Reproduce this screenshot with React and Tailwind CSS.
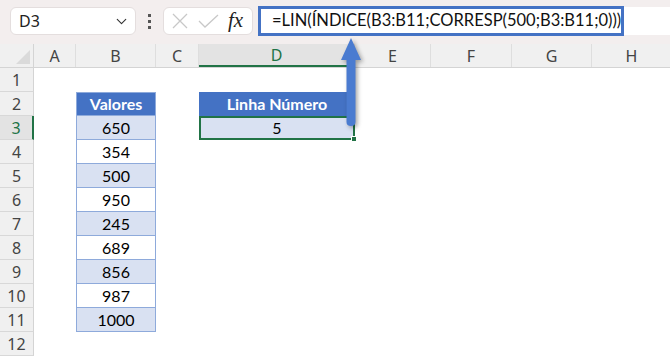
import { ChevronDown } from "lucide-react";

const cols = [
  { name: "A", w: 42 },
  { name: "B", w: 80 },
  { name: "C", w: 43 },
  { name: "D", w: 156 },
  { name: "E", w: 76 },
  { name: "F", w: 81 },
  { name: "G", w: 80 },
  { name: "H", w: 80 },
];

const valores = [650, 354, 500, 950, 245, 689, 856, 987, 1000];

const uiFont = { fontFamily: '"Noto Sans", "Open Sans", sans-serif' };
const cellFont = { fontFamily: 'Lato, "Noto Sans", sans-serif' };

function Cell({ row, col }) {
  // table B2:B11
  if (col === "B" && row === 2) {
    return (
      <div className="h-full bg-[#4472c4] border border-[#8eaadb] flex items-center justify-center text-white font-bold text-[16px]">
        Valores
      </div>
    );
  }
  if (col === "B" && row >= 3 && row <= 11) {
    const odd = (row - 3) % 2 === 0;
    return (
      <div
        className={`h-full border-x border-b border-[#8eaadb] flex items-center justify-center text-[16px] text-black ${
          odd ? "bg-[#d9e1f2]" : "bg-white"
        }`}
      >
        {valores[row - 3]}
      </div>
    );
  }
  if (col === "D" && row === 2) {
    return (
      <div className="h-full bg-[#4472c4] flex items-center justify-center text-white font-bold text-[16px]">
        Linha Número
      </div>
    );
  }
  if (col === "D" && row === 3) {
    return (
      <div className="relative h-full bg-[#d9e1f2] border-2 border-[#217346] flex items-center justify-center text-[16px] text-black">
        5
        <div className="absolute -right-[4px] -bottom-[4px] w-[6px] h-[6px] bg-[#217346] border border-white" />
      </div>
    );
  }
  return <div className="h-full" />;
}

export default function App() {
  const rows = Array.from({ length: 12 }, (_, i) => i + 1);
  return (
    <div className="relative w-[670px] h-[356px] overflow-hidden bg-white" style={uiFont}>
      {/* formula bar */}
      <div className="h-[44px] bg-[#f3eeee] flex items-start pt-[7px] pl-[10px]">
        <div className="w-[126px] h-[28px] bg-white rounded-md border border-[#e4dede] flex items-center justify-between pl-[8px] pr-[5px] text-[16px] text-[#222]">
          <span>D3</span>
          <ChevronDown size={17} strokeWidth={1.6} className="text-[#333]" />
        </div>
        <div className="w-[27px] h-[28px] flex flex-col items-center justify-center gap-[3px]">
          <span className="w-[3px] h-[3px] bg-[#555]" />
          <span className="w-[3px] h-[3px] bg-[#555]" />
          <span className="w-[3px] h-[3px] bg-[#555]" />
        </div>
        <div className="w-[90px] h-[28px] bg-white rounded-md border border-[#e4dede] flex items-center pl-[7px] gap-[9px]">
          <svg width="18" height="18" viewBox="0 0 18 18">
            <path d="M2 2 L16 16 M16 2 L2 16" stroke="#c8c8c8" strokeWidth="1.3" fill="none" />
          </svg>
          <svg width="21" height="18" viewBox="0 0 21 18">
            <path d="M1 9 L7 15 L20 3" stroke="#c8c8c8" strokeWidth="1.3" fill="none" />
          </svg>
          <span
            className="italic text-[21px] text-[#222] leading-none -mt-[2px]"
            style={{ fontFamily: '"Liberation Serif", serif' }}
          >
            fx
          </span>
        </div>
        <div className="ml-[5px] flex-1 h-[28px] bg-white flex items-center">
          <div
            className="w-[366px] h-[30px] -mt-[1px] border-[3px] border-[#4472c4] flex items-center pl-[11px] text-[16.5px] text-[#111]"
            style={cellFont}
          >
            =LIN(ÍNDICE(B3:B11;CORRESP(500;B3:B11;0)))
          </div>
        </div>
      </div>

      {/* column headers */}
      <div className="flex h-[24px] bg-[#f0f0f0] border-b border-[#d4d4d4]">
        <div className="w-[34px] shrink-0 border-r border-[#d4d4d4] relative">
          <div className="absolute right-[3px] bottom-[3px] w-0 h-0 border-l-[14px] border-l-transparent border-b-[14px] border-b-[#dadada]" />
        </div>
        {cols.map((c) => (
          <div
            key={c.name}
            style={{ width: c.w }}
            className={`shrink-0 flex items-center justify-center text-[16px] border-r border-[#dedede] ${
              c.name === "D" ? "bg-[#e3e3e3] text-[#217346] border-b-2 border-b-[#217346]" : "text-[#444]"
            }`}
          >
            {c.name}
          </div>
        ))}
      </div>

      {/* rows */}
      <div style={cellFont}>
        {rows.map((r) => (
          <div key={r} className="flex h-[24px]">
            <div
              className={`w-[34px] shrink-0 flex items-center justify-center text-[16px] border-b border-[#d8d8d8] ${
                r === 3
                  ? "bg-[#e3e3e3] text-[#217346] border-r-2 border-r-[#217346]"
                  : "bg-[#f0f0f0] text-[#444] border-r border-r-[#d4d4d4]"
              }`}
              style={uiFont}
            >
              {r}
            </div>
            {cols.map((c) => (
              <div key={c.name} style={{ width: c.w }} className="shrink-0 h-full">
                <Cell row={r} col={c.name} />
              </div>
            ))}
          </div>
        ))}
      </div>

      {/* arrow annotation */}
      <svg
        className="absolute left-[338px] top-[36px]"
        width="26"
        height="94"
        viewBox="0 0 26 94"
        style={{ filter: "drop-shadow(2px 2px 2px rgba(0,0,0,0.35))" }}
      >
        <path d="M13 2 L23 24 L17.5 24 L17.5 86 Q17.5 90 13 90 Q8.5 90 8.5 86 L8.5 24 L3 24 Z" fill="#4a7bd0" />
      </svg>
    </div>
  );
}
